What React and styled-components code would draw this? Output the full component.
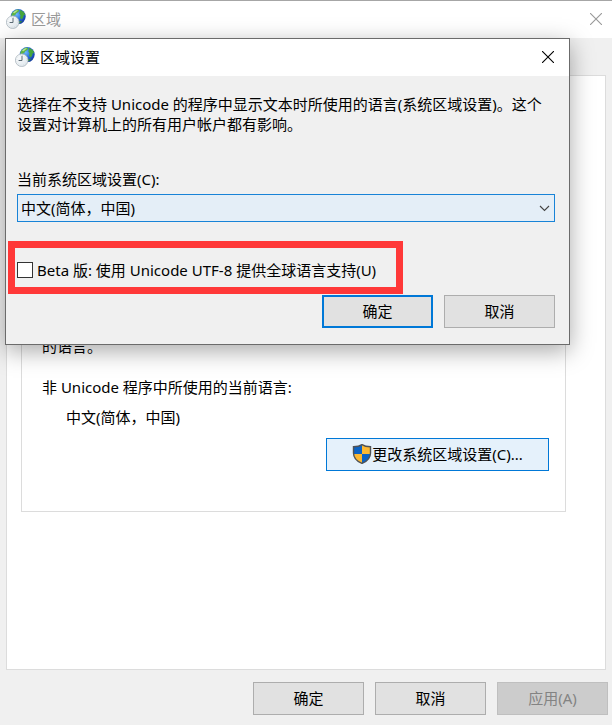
// src/App.jsx
import React, { useState } from 'react';
import styled, { createGlobalStyle, css } from 'styled-components';

const GlobalStyle = createGlobalStyle`
  * {
    box-sizing: border-box;
  }

  body {
    margin: 0;
    background: #f0f0f0;
  }

  body, button, select, input {
    font-family: 'Noto Sans', 'Noto Sans CJK SC', sans-serif;
    font-size: 15px;
    line-height: 20px;
    color: #000;
  }

  p, h1, h2 {
    margin: 0;
  }
`;

// Main window
const Window = styled.main`
  position: relative;
  display: flex;
  flex-direction: column;
  min-height: 100vh;
  border-top: 1px solid #a6a6a6;
  background: #f0f0f0;
`;

const TitleBar = styled.header`
  display: flex;
  align-items: center;
  gap: 5px;
  height: 37px;
  padding: 0 10px 2px 6px;
  background: #fff;
  color: ${props => (props.$inactive ? '#999' : '#000')};
`;

const Title = styled.h1`
  flex: 1;
  font-size: 15px;
  font-weight: 400;
  line-height: 20px;
`;

const CloseButton = styled.button`
  display: flex;
  padding: 0;
  border: 0;
  background: none;
  color: inherit;
`;

const TabPanel = styled.section`
  flex: 1;
  margin: 37px 6px 0;
  padding: 14px 39px 14px 14px;
  border: 1px solid #dcdcdc;
  background: #fff;
`;

// The upper part of the group lies under the dialog
const Group = styled.div`
  display: flex;
  flex-direction: column;
  padding: 245px 16px 40px 20px;
  border: 1px solid #dcdcdc;
`;

const GroupText = styled.p`
  margin-bottom: 21px;
`;

const CurrentLanguage = styled.p`
  margin: -11px 0 11px 24px;
`;

const Button = styled.button`
  width: 111px;
  height: 33px;
  padding: 0 0 2px;
  border: 1px solid #adadad;
  background: #e1e1e1;

  ${props =>
    props.$primary &&
    css`
      border: 2px solid #0078d7;
    `}

  &:disabled {
    border-color: #bfbfbf;
    background: #ccc;
    color: #838383;
  }
`;

const ShieldButton = styled(Button)`
  display: flex;
  align-items: center;
  justify-content: center;
  align-self: flex-end;
  width: 223px;
  border-color: #0078d7;
  background: #e5f1fb;
`;

const ButtonRow = styled.footer`
  display: flex;
  justify-content: flex-end;
  gap: 11px;
`;

const WindowButtons = styled(ButtonRow)`
  padding: 12px 4px 10px;
`;

// Dialog on top of the window
const Dialog = styled.div`
  position: absolute;
  top: 37px;
  left: 5px;
  right: 42px;
  border: 1px solid #6b6b6b;
  background: #f0f0f0;
  box-shadow: 0 6px 22px rgba(0, 0, 0, 0.34);

  ${TitleBar} {
    padding: 0 15px 2px 9px;
  }
`;

const DialogBody = styled.div`
  display: flex;
  flex-direction: column;
  padding: 18px 14px 16px 11px;
`;

const FieldLabel = styled.label`
  margin: 35px 0 5px;
`;

const SelectBox = styled.div`
  position: relative;

  svg {
    position: absolute;
    top: 11px;
    right: 5px;
    pointer-events: none;
  }
`;

const Select = styled.select`
  display: block;
  width: 100%;
  height: 28px;
  padding: 0 24px 0 3px;
  border: 1px solid #1883d7;
  border-radius: 0;
  appearance: none;
  background: #e4eef7;
`;

const CheckLabel = styled.label`
  position: relative;
  display: flex;
  align-items: center;
  align-self: flex-start;
  gap: 4px;
  margin: 38px 0 15px;

  /* Red frame around the option */
  &::after {
    content: '';
    position: absolute;
    inset: -19px -27px -14px -9px;
    border: 7px solid #ff3838;
    pointer-events: none;
  }
`;

const Checkbox = styled.input`
  width: 16px;
  height: 16px;
  margin: 0;
  border: 1px solid #333;
  appearance: none;
  background: #fff;

  &:checked {
    box-shadow: inset 0 0 0 3px #fff;
    background: #333;
  }
`;

const GlobeIcon = () => (
  <svg width="20" height="20" viewBox="0 0 20 20" aria-hidden="true">
    <defs>
      <radialGradient id="sea" cx="0.4" cy="0.35" r="0.7">
        <stop offset="0" stopColor="#6db8fa" />
        <stop offset="0.5" stopColor="#2a6fdc" />
        <stop offset="1" stopColor="#12359c" />
      </radialGradient>
      <linearGradient id="face" x1="0" y1="0" x2="1" y2="1">
        <stop offset="0" stopColor="#fff" />
        <stop offset="1" stopColor="#dde6ec" />
      </linearGradient>
    </defs>
    <circle cx="12.2" cy="7.6" r="7.5" fill="url(#sea)" />
    <path d="M5.4 5.4C6.4 2.4 9.4.4 12.4.4L13.4 1.8 11.6 3.4 10.2 4.2 9.2 6 7.4 6.8 5.6 8.2Z" fill="#5fb544" />
    <path d="M14.2.9C16.4 1.6 18.4 3.2 19.2 5.4L17.6 6.6 17 9 15.2 10.6 14 8.6 14.6 6.4 13.4 4.4Z" fill="#46a53c" />
    <path d="M7 3.8C8.4 2 10.4 1.1 12 1L10.4 2.8 8.4 4.2Z" fill="#b9e592" />
    <path d="M12.6 12.6 15.4 12 16 12.8 13.2 14.4Z" fill="#2f8a3c" />
    <circle cx="6.7" cy="13.2" r="6.3" fill="url(#face)" stroke="#a9b5bc" strokeWidth="0.8" />
    <circle cx="6.7" cy="13.2" r="4.9" fill="none" stroke="#cbd5da" strokeWidth="0.8" strokeDasharray="0.8 1.76" />
    <path d="M7 8.8V13.5H3.6" fill="none" stroke="#5c6b75" strokeWidth="1" />
  </svg>
);

const CloseIcon = () => (
  <svg width="12" height="12" viewBox="0 0 12 12" aria-hidden="true">
    <path d="M0 0 12 12M12 0 0 12" stroke="currentColor" strokeWidth="1.1" />
  </svg>
);

const ChevronIcon = () => (
  <svg width="11" height="7" viewBox="0 0 11 7" aria-hidden="true">
    <path d="M1 1 5.5 5.5 10 1" fill="none" stroke="#444" strokeWidth="1.1" />
  </svg>
);

const SHIELD = 'M9.5 0.7C12 2.4 15 2.8 18 2.8V9C18 13.8 14.6 17.4 9.5 19.4 4.4 17.4 1 13.8 1 9V2.8C4 2.8 7 2.4 9.5 0.7Z';

const ShieldIcon = () => (
  <svg width="20" height="20" viewBox="0 0 19 20" aria-hidden="true">
    <clipPath id="shield">
      <path d={SHIELD} />
    </clipPath>
    <g clipPath="url(#shield)">
      <path d="M0 0H9.5V10H0ZM9.5 10H19V20H9.5Z" fill="#0c63c4" />
      <path d="M9.5 0H19V10H9.5ZM0 10H9.5V20H0Z" fill="#fdb932" />
    </g>
    <path d={SHIELD} fill="none" stroke="#4f5357" strokeWidth="1.4" />
  </svg>
);

const LOCALE = '中文(简体，中国)';

export default function App() {
  const [utf8, setUtf8] = useState(false);

  return (
    <>
      <GlobalStyle />
      <Window>
        <TitleBar $inactive>
          <GlobeIcon />
          <Title>区域</Title>
          <CloseButton aria-label="关闭">
            <CloseIcon />
          </CloseButton>
        </TitleBar>

        <TabPanel>
          <Group>
            <GroupText>的语言。</GroupText>
            <GroupText>非 Unicode 程序中所使用的当前语言:</GroupText>
            <CurrentLanguage>{LOCALE}</CurrentLanguage>
            <ShieldButton>
              <ShieldIcon />
              更改系统区域设置(C)...
            </ShieldButton>
          </Group>
        </TabPanel>

        <WindowButtons>
          <Button>确定</Button>
          <Button>取消</Button>
          <Button disabled>应用(A)</Button>
        </WindowButtons>

        <Dialog role="dialog" aria-labelledby="dialog-title">
          <TitleBar>
            <GlobeIcon />
            <Title as="h2" id="dialog-title">区域设置</Title>
            <CloseButton aria-label="关闭">
              <CloseIcon />
            </CloseButton>
          </TitleBar>
          <DialogBody>
            <p>
              选择在不支持 Unicode 的程序中显示文本时所使用的语言(系统区域设置)。这个设置对计算机上的所有用户帐户都有影响。
            </p>
            <FieldLabel htmlFor="locale">当前系统区域设置(C):</FieldLabel>
            <SelectBox>
              <Select id="locale">
                <option>{LOCALE}</option>
              </Select>
              <ChevronIcon />
            </SelectBox>
            <CheckLabel>
              <Checkbox
                type="checkbox"
                checked={utf8}
                onChange={e => setUtf8(e.target.checked)}
              />
              Beta 版: 使用 Unicode UTF-8 提供全球语言支持(U)
            </CheckLabel>
            <ButtonRow>
              <Button $primary>确定</Button>
              <Button>取消</Button>
            </ButtonRow>
          </DialogBody>
        </Dialog>
      </Window>
    </>
  );
}
